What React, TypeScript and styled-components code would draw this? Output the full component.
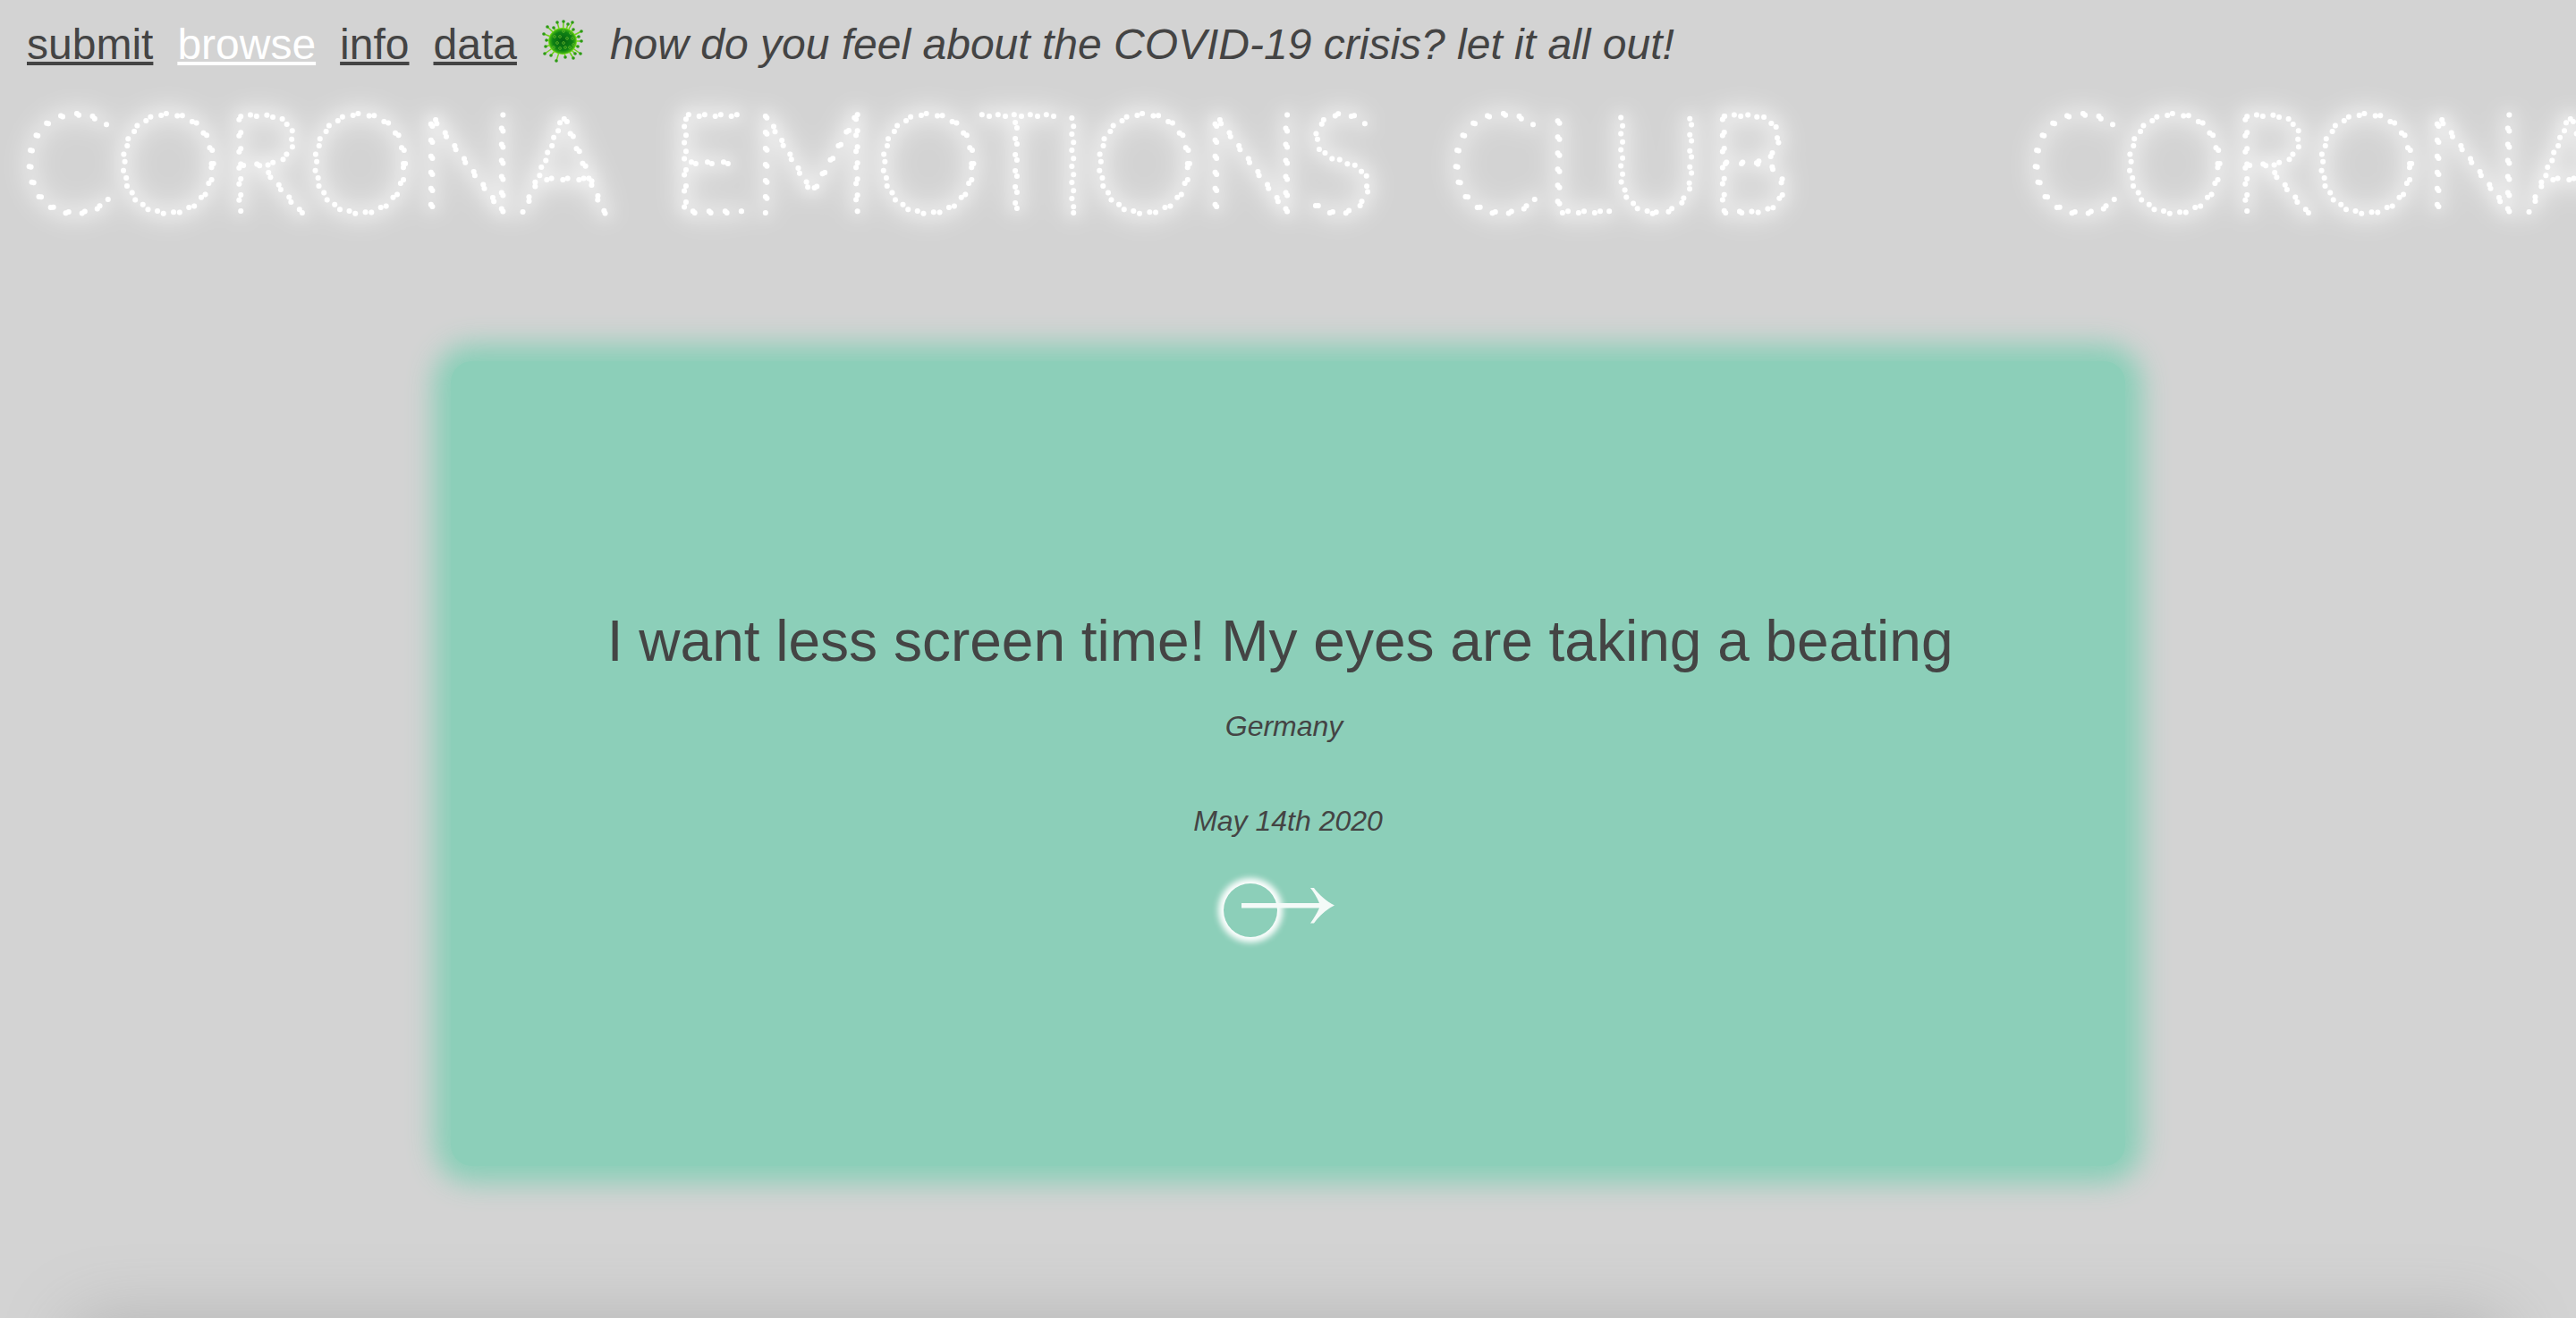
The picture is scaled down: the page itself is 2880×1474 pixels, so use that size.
import React from "react";
import styled, { createGlobalStyle } from "styled-components";

const GlobalStyle = createGlobalStyle`
  * { box-sizing: border-box; margin: 0; padding: 0; }
  body {
    background: #d3d3d3;
    color: #444;
    font-family: "Liberation Sans", Arial, Helvetica, sans-serif;
  }
`;

const Page = styled.div`
  display: flex;
  flex-direction: column;
  height: 100vh;
  overflow: hidden;
`;

const Nav = styled.nav`
  display: flex;
  align-items: center;
  gap: 27px;
  padding: 22px 30px 0;
  font-size: 48px;
  line-height: 56px;
`;

const NavLink = styled.a<{ $active?: boolean }>`
  color: ${(p) => (p.$active ? "#fff" : "#444")};
  text-decoration: underline;
`;

const Tagline = styled.p`
  font-style: italic;
  white-space: nowrap;
`;

const VirusIcon = styled.svg`
  flex: none;
  align-self: flex-start;
  width: 50px;
  height: 48px;
`;

const Marquee = styled.header`
  display: flex;
  filter: drop-shadow(0 0 8px #fff) drop-shadow(0 0 12px #fff)
    drop-shadow(0 0 16px rgba(255, 255, 255, 0.4));
`;

const Title = styled.h1`
  flex: none;
`;

const Sign = styled.svg`
  display: block;
  width: 2243px;
  height: 200px;
  overflow: visible;
`;

const DottedText = styled.text`
  font-family: Lato, sans-serif;
  font-size: 156px;
  font-weight: 100;
  fill: none;
  stroke: #fff;
  stroke-width: 6px;
  stroke-linecap: round;
  stroke-dasharray: 0 18;
`;

const Main = styled.main`
  flex: 1 0 auto;
  display: flex;
  flex-direction: column;
  align-items: center;
  padding-top: 126px;
`;

const Card = styled.article`
  display: flex;
  flex-direction: column;
  align-items: center;
  justify-content: center;
  width: 65%;
  min-height: 900px;
  padding-top: 20px;
  border-radius: 24px;
  background: #8ccfb9;
  box-shadow: 0 0 30px 19px #8acfb8;
`;

const Quote = styled.p`
  font-size: 64px;
  line-height: 74px;
  white-space: pre-wrap;
  text-align: center;
`;

const Meta = styled.p<{ $gap: number }>`
  margin-top: ${(p) => p.$gap}px;
  font-size: 32px;
  line-height: 36px;
  font-style: italic;
  white-space: pre;
`;

const NextButton = styled.button`
  position: relative;
  width: 144px;
  height: 60px;
  margin-top: 52px;
  border: 0;
  background: none;
  cursor: pointer;

  &::before {
    content: "";
    position: absolute;
    left: 0;
    top: 0;
    width: 60px;
    height: 60px;
    border-radius: 50%;
    box-shadow: 0 0 7px 6px #fff;
  }
`;

const Arrow = styled.svg`
  position: relative;
  display: block;
  width: 144px;
  height: 60px;
  fill: #f4faf8;
`;

const NextSection = styled.footer`
  flex: none;
  height: 200px;
  margin: 0 80px -200px;
  border-radius: 24px;
  box-shadow: 0 0 80px #b4b4b4;
`;

const spikes = [
  [25, 2], [18, 3], [35, 3], [7, 8], [14, 9], [3, 16], [6, 23], [5, 30],
  [4, 38], [11, 40], [17, 46], [27, 42], [36, 43], [38, 38], [44, 38],
  [41, 30], [45, 24], [42, 19], [45, 13], [36, 11], [30, 5],
];

const receptors = [
  [25, 13], [21, 19], [15, 19], [29, 21], [18, 26], [25, 26], [35, 21],
  [14, 31], [21, 32], [27, 31], [32, 31], [36, 28], [33, 15],
];

function Virus() {
  return (
    <VirusIcon viewBox="0 0 50 48" role="img" aria-label="virus">
      <defs>
        <radialGradient id="virus-body">
          <stop offset="0" stopColor="#04600f" />
          <stop offset="0.7" stopColor="#0f8214" />
          <stop offset="0.9" stopColor="#3cb012" />
          <stop offset="1" stopColor="#86e61c" />
        </radialGradient>
      </defs>
      {spikes.map(([x, y]) => (
        <g key={`${x}-${y}`}>
          <line x1="24" y1="24" x2={x} y2={y} stroke="#6fd01b" strokeWidth="1.5" />
          <circle cx={x} cy={y} r="1.8" fill="#2c9a14" />
        </g>
      ))}
      <ellipse cx="24" cy="24" rx="16" ry="15" fill="url(#virus-body)" />
      {receptors.map(([x, y]) => (
        <circle key={`${x}-${y}`} cx={x} cy={y} r="1.4" fill="none" stroke="#63b82a" strokeWidth="0.8" />
      ))}
    </VirusIcon>
  );
}

function NeonSign() {
  return (
    <Sign>
      <DottedText y="160">
        <tspan x="22">CORONA</tspan> <tspan x="747">EMOTIONS</tspan>{" "}
        <tspan x="1617">CLUB</tspan>
      </DottedText>
    </Sign>
  );
}

export default function App() {
  return (
    <Page>
      <GlobalStyle />
      <Nav>
        <NavLink href="#submit">submit</NavLink>
        <NavLink href="#browse" $active>browse</NavLink>
        <NavLink href="#info">info</NavLink>
        <NavLink href="#data">data</NavLink>
        <Virus />
        <Tagline>how do you feel about the COVID-19 crisis? let it all out!</Tagline>
      </Nav>
      <Marquee>
        <Title><NeonSign /></Title>
        <Title as="div" aria-hidden="true"><NeonSign /></Title>
      </Marquee>
      <Main>
        <Card>
          <Quote>{"I want less screen time! My eyes are taking a beating "}</Quote>
          <Meta $gap={40}>{"Germany "}</Meta>
          <Meta $gap={70}>May 14th 2020</Meta>
          <NextButton type="button" aria-label="next">
            <Arrow viewBox="0 0 144 60">
              <path d="M20 22H107C104 15 101 10 97 5H101C107 13 115 20 124 24.5C115 29 107 36 101 44.5H97C101 39 104 34 107 27.5H20Z" />
            </Arrow>
          </NextButton>
        </Card>
      </Main>
      <NextSection />
    </Page>
  );
}
